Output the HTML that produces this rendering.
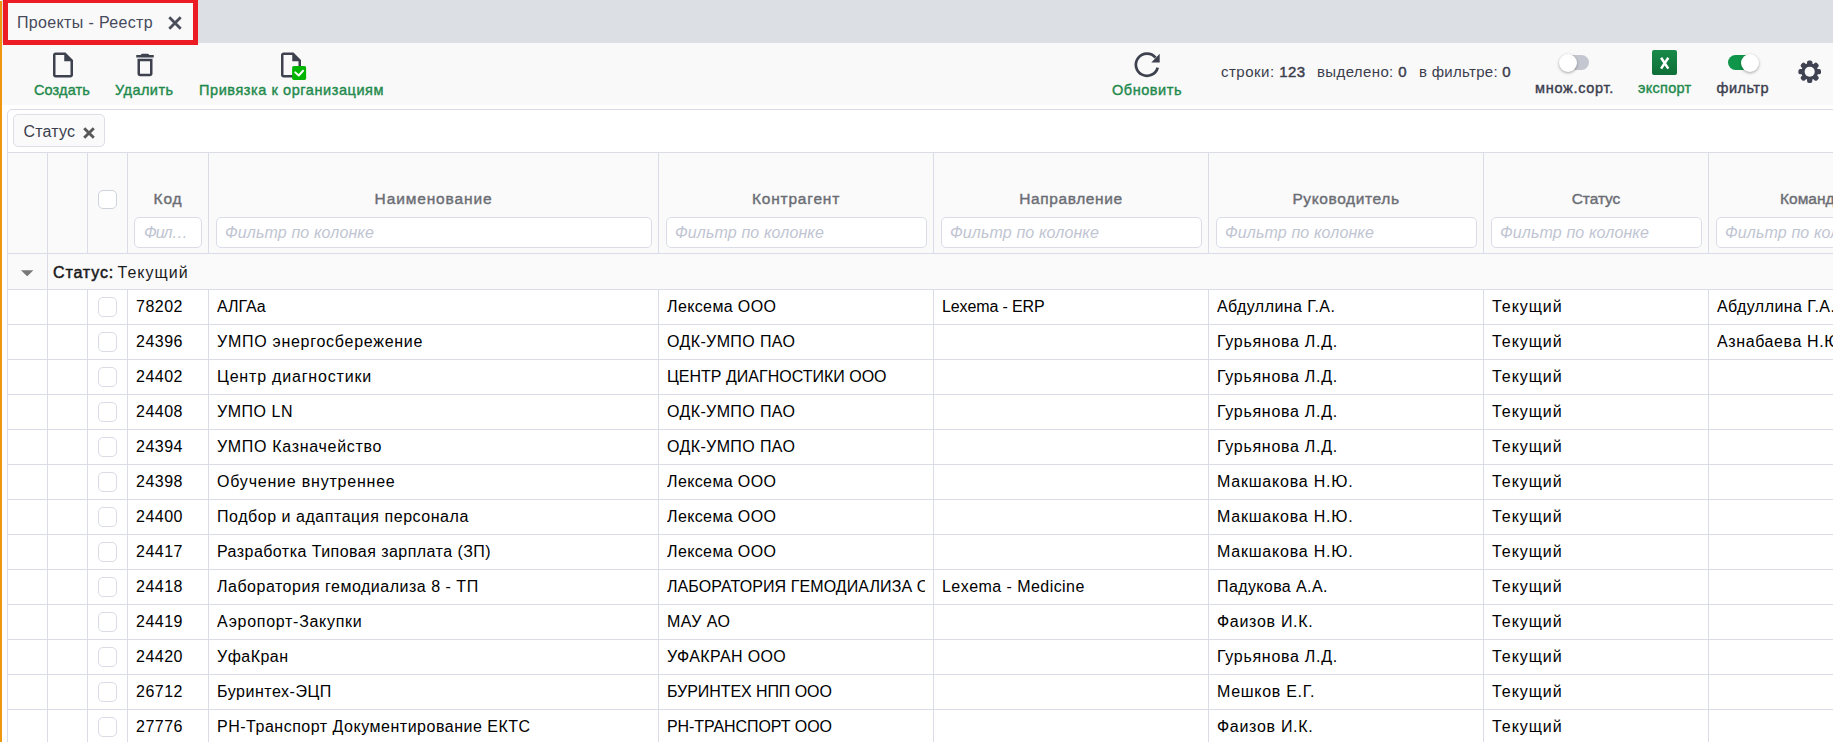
<!DOCTYPE html>
<html lang="ru"><head><meta charset="utf-8"><title>Проекты - Реестр</title>
<style>
*{box-sizing:border-box;margin:0;padding:0}
html,body{width:1833px;height:742px;overflow:hidden;background:#fff}
body{position:relative;font-family:"Liberation Sans",sans-serif;font-size:16px;color:#111}
.edge{position:absolute;left:0;top:1px;width:2px;height:741px;background:#ee960e}
.tabbar{z-index:2;position:absolute;left:2px;top:0;width:1831px;height:43px;background:#dcdfe4}
.tab{position:absolute;left:6px;top:0;width:190px;height:43px;background:#f9f9f9}
.tab .tt{position:absolute;left:9px;top:0;line-height:46px;font-size:16px;color:#454a5c;white-space:nowrap}
.tab svg{position:absolute;left:159.5px;top:15.5px;width:14px;height:14px}
.tb{position:absolute;left:2px;top:42px;width:1831px;height:63px;background:#f9f9f9}
.btn{position:absolute;top:0;height:63px}
.lbl{position:absolute;white-space:nowrap;font-size:14.5px;line-height:18px;top:39px;color:#1f8a4c;font-weight:normal;-webkit-text-stroke:0.4px #1f8a4c}
.lbl.dk{color:#3b3e4e;-webkit-text-stroke-color:#3b3e4e}
.ico{position:absolute}
.stat{position:absolute;top:21px;font-size:15px;line-height:18px;color:#3b3e4e;white-space:nowrap}
.stat b{font-weight:normal;-webkit-text-stroke:0.45px #3b3e4e}
.grid{position:absolute;left:7px;top:109px;width:1900px;height:700px;border:1px solid #dadde8;border-radius:5px 0 0 0;background:#fff}
.grid>div{position:absolute;left:0;width:1900px}
.gp{top:0;height:42px}
.chip{position:absolute;left:5px;top:4px;width:92px;height:33px;border:1px solid #dcdfe8;border-radius:5px;background:#fafafa}
.chip .ct{position:absolute;left:9.5px;top:0;line-height:33px;font-size:16px;color:#3b3e4e}
.chip .cx{position:absolute;left:69px;top:12px;width:12px;height:12px}
.hdr{top:42px;height:102px;border-top:1px solid #dadde8;border-bottom:1px solid #dadde8;background:#fafafa}
.vl{position:absolute;top:0;bottom:0;width:1px;background:#dadde8}
.hl{position:absolute;top:37px;line-height:18px;font-size:15.5px;font-weight:normal;color:#6b6d74;-webkit-text-stroke:0.4px #6b6d74;text-align:center;white-space:nowrap}
.fi{position:absolute;top:64px;height:31px;border:1px solid #dadde8;border-radius:5px;background:#fff;overflow:hidden;white-space:nowrap}
.fi em{position:absolute;left:8px;top:0;line-height:29px;font-size:16px;font-style:italic;color:#bfc5d2}
.cb{position:absolute;width:19px;height:19px;border:1px solid #d9dce6;border-radius:5px;background:#fff}
.hcb{left:90px;top:37px;border-color:#cfd3de}
.rcb{left:90px;top:7px;height:20px}
.grp{top:144px;height:36px;border-bottom:1px solid #dadde8;background:#fafafa}
.tri{position:absolute;left:13.3px;top:15.6px;width:12.4px;height:6.6px}
.gt{position:absolute;left:45px;top:0;line-height:37px;word-spacing:-2px;font-size:16px;white-space:nowrap;color:#1a1a1a}
.row{height:35px;border-bottom:1px solid #dadde8;background:#fff}
.c{position:absolute;top:0;line-height:34px;white-space:nowrap;overflow:hidden;font-size:16px;color:#000}
.red{z-index:3;position:absolute;left:3px;top:-2px;width:195px;height:47px;border:5px solid #ec1c24}
.tg{position:absolute;width:32px;height:20px}
.tg .trk{position:absolute;left:2px;top:0;width:28.5px;height:15px;border-radius:8px;background:#c4c7d0}
.tg .knb{position:absolute;left:0;top:-1.5px;width:18.4px;height:18.4px;border-radius:50%;background:#fff;box-shadow:0 1px 3px rgba(0,0,0,.35)}
.tg.on .trk{left:0;width:30px;background:#10964a}
.tg.on .knb{left:13px}
.xl{position:absolute;width:25px;height:25px;border-radius:2px;background:linear-gradient(#178a49,#0f6f38)}
.xl svg{position:absolute;left:0;top:0}
.gt b{font-weight:normal;-webkit-text-stroke:0.5px #1a1a1a}
#l1{letter-spacing:0.12px}
#l2{letter-spacing:0.45px}
#l3{letter-spacing:0.57px}
#l4{letter-spacing:0.54px}
#l5{letter-spacing:0.71px}
#l6{letter-spacing:0.30px}
#l7{letter-spacing:0.48px}
#s1{letter-spacing:0.48px}
#s2{letter-spacing:0.38px}
#s3{letter-spacing:0.29px}
.tab .tt{letter-spacing:0.35px}.chip .ct{letter-spacing:0.16px}.gt b{letter-spacing:0.87px}.gt{letter-spacing:1.00px}.fi em{letter-spacing:0.12px}

</style></head>
<body>
<div class="edge"></div>
<div class="tabbar">
  <div class="tab"><span class="tt">Проекты - Реестр</span>
    <svg viewBox="0 0 13 13"><path d="M1.2 1.2L11.8 11.8M11.8 1.2L1.2 11.8" stroke="#4a4d5a" stroke-width="2.6" fill="none"/></svg>
  </div>
</div>
<div class="tb">
  <svg class="ico" style="left:46px;top:8px" width="30" height="30" viewBox="0 0 24 24"><path fill="#3e414e" d="M14 2H6c-1.1 0-1.99.9-1.99 2L4 20c0 1.1.89 2 1.99 2H18c1.1 0 2-.9 2-2V8l-6-6zM6 20V4h7v5h5v11H6z"/></svg>
  <span class="lbl" id="l1" style="left:32px">Создать</span>
  <svg class="ico" style="left:128px;top:8px" width="30" height="30" viewBox="0 0 24 24"><path fill="#3e414e" d="M6 19c0 1.1.9 2 2 2h8c1.1 0 2-.9 2-2V7H6v12zM8 9h8v10H8V9zm7.5-5l-1-1h-5l-1 1H5v2h14V4h-3.5z"/></svg>
  <span class="lbl" id="l2" style="left:113px">Удалить</span>
  <svg class="ico" style="left:274px;top:8px" width="34" height="34" viewBox="0 0 27.2 27.2"><path fill="#3e414e" d="M14 2H6c-1.1 0-1.99.9-1.99 2L4 20c0 1.1.89 2 1.99 2H18c1.1 0 2-.9 2-2V8l-6-6zM6 20V4h7v5h5v11H6z"/><rect x="12.9" y="12.8" width="11.2" height="11.2" rx="1.4" fill="#00b400"/><path d="M15.4 17.9L18.2 20.4L21.6 16.6" stroke="#fff" stroke-width="1.6" fill="none" stroke-linecap="round" stroke-linejoin="round"/></svg>
  <span class="lbl" id="l3" style="left:197px">Привязка к организациям</span>
  <svg class="ico" style="left:1130px;top:8px" width="30" height="30" viewBox="0 0 30 30"><path d="M23.5 7.57A11.1 11.1 0 1 0 25.72 17.57" stroke="#3e414e" stroke-width="2.7" fill="none"/><path d="M27.7 3.8V12.4H19.3Z" fill="#3e414e"/></svg>
  <span class="lbl" id="l4" style="left:1110px">Обновить</span>
  <span class="stat" id="s1" style="left:1219px">строки: <b>123</b></span>
  <span class="stat" id="s2" style="left:1315px">выделено: <b>0</b></span>
  <span class="stat" id="s3" style="left:1417px">в фильтре: <b>0</b></span>
  <div class="tg" style="left:1556.5px;top:13px"><i class="trk"></i><i class="knb"></i></div>
  <span class="lbl dk" id="l5" style="left:1533px;top:37px">множ.сорт.</span>
  <div class="xl" style="left:1650px;top:8px"><svg width="25" height="25" viewBox="0 0 25 25"><path d="M9.1 7.8L16.3 18.6M16.3 7.8L9.1 18.6" stroke="#fff" stroke-width="2.5" fill="none"/></svg></div>
  <span class="lbl" id="l6" style="left:1636px;top:37px">экспорт</span>
  <div class="tg on" style="left:1726px;top:13px"><i class="trk"></i><i class="knb"></i></div>
  <span class="lbl dk" id="l7" style="left:1714.5px;top:37px">фильтр</span>
  <svg class="ico" style="left:1796.3px;top:18.1px" width="23.4" height="23.4" viewBox="-12 -12 24 24"><g fill="#3f4250"><circle r="8.6"/><g id="t"><rect x="-2.7" y="-11.6" width="5.4" height="23.2" rx="2"/></g><rect x="-2.7" y="-11.6" width="5.4" height="23.2" rx="2" transform="rotate(45)"/><rect x="-2.7" y="-11.6" width="5.4" height="23.2" rx="2" transform="rotate(90)"/><rect x="-2.7" y="-11.6" width="5.4" height="23.2" rx="2" transform="rotate(135)"/></g><circle r="5.2" fill="#f9f9f9"/></svg>
</div>
<div class="grid">
<div class="gp"><div class="chip"><span class="ct">Статус</span><svg class="cx" viewBox="0 0 10 10"><path d="M1 1L9 9M9 1L1 9" stroke="#585858" stroke-width="2.4" fill="none"/></svg></div></div>
<div class="hdr">
<i class="vl" style="left:39px"></i><i class="vl" style="left:79px"></i><i class="vl" style="left:119px"></i><i class="vl" style="left:200px"></i><i class="vl" style="left:650px"></i><i class="vl" style="left:925px"></i><i class="vl" style="left:1200px"></i><i class="vl" style="left:1475px"></i><i class="vl" style="left:1700px"></i><span class="cb hcb"></span>
<span class="hl" style="left:120px;width:80px;letter-spacing:0.80px">Код</span><span class="fi" style="left:126px;width:68px"><em style="left:9px;letter-spacing:-1px">Фил…</em></span>
<span class="hl" style="left:201px;width:449px;letter-spacing:0.86px">Наименование</span><span class="fi" style="left:208px;width:436px"><em>Фильтр по колонке</em></span>
<span class="hl" style="left:651px;width:274px;letter-spacing:0.80px">Контрагент</span><span class="fi" style="left:658px;width:261px"><em>Фильтр по колонке</em></span>
<span class="hl" style="left:926px;width:274px;letter-spacing:0.59px">Направление</span><span class="fi" style="left:933px;width:261px"><em>Фильтр по колонке</em></span>
<span class="hl" style="left:1201px;width:274px;letter-spacing:0.61px">Руководитель</span><span class="fi" style="left:1208px;width:261px"><em>Фильтр по колонке</em></span>
<span class="hl" style="left:1476px;width:224px;letter-spacing:-0.06px">Статус</span><span class="fi" style="left:1483px;width:211px"><em>Фильтр по колонке</em></span>
<span class="hl" style="left:1772px;width:300px;text-align:left">Команда проекта</span><span class="fi" style="left:1708px;width:211px"><em>Фильтр по колонке</em></span>
</div>
<div class="grp"><i class="vl" style="left:39px"></i><svg class="tri" viewBox="0 0 12 6"><path d="M0 0H12L6 6Z" fill="#787878"/></svg><span class="gt"><b>Статус:</b> Текущий</span></div>
<div class="row" style="top:180px"><i class="vl" style="left:39px"></i><i class="vl" style="left:79px"></i><i class="vl" style="left:119px"></i><i class="vl" style="left:200px"></i><i class="vl" style="left:650px"></i><i class="vl" style="left:925px"></i><i class="vl" style="left:1200px"></i><i class="vl" style="left:1475px"></i><i class="vl" style="left:1700px"></i><span class="cb rcb"></span><span class="c" style="left:128px;width:72px;letter-spacing:0.50px">78202</span><span class="c" style="left:209px;width:433px;letter-spacing:-0.07px">АЛГАа</span><span class="c" style="left:659px;width:258px;letter-spacing:0.38px">Лексема ООО</span><span class="c" style="left:934px;width:258px;letter-spacing:-0.12px">Lexema - ERP</span><span class="c" style="left:1209px;width:258px;letter-spacing:0.44px">Абдуллина Г.А.</span><span class="c" style="left:1484px;width:208px;letter-spacing:0.95px">Текущий</span><span class="c" style="left:1709px;width:208px;letter-spacing:0.44px">Абдуллина Г.А.</span></div>
<div class="row" style="top:215px"><i class="vl" style="left:39px"></i><i class="vl" style="left:79px"></i><i class="vl" style="left:119px"></i><i class="vl" style="left:200px"></i><i class="vl" style="left:650px"></i><i class="vl" style="left:925px"></i><i class="vl" style="left:1200px"></i><i class="vl" style="left:1475px"></i><i class="vl" style="left:1700px"></i><span class="cb rcb"></span><span class="c" style="left:128px;width:72px;letter-spacing:0.50px">24396</span><span class="c" style="left:209px;width:433px;letter-spacing:0.73px">УМПО энергосбережение</span><span class="c" style="left:659px;width:258px;letter-spacing:0.38px">ОДК-УМПО ПАО</span><span class="c" style="left:1209px;width:258px;letter-spacing:0.71px">Гурьянова Л.Д.</span><span class="c" style="left:1484px;width:208px;letter-spacing:0.95px">Текущий</span><span class="c" style="left:1709px;width:208px;letter-spacing:0.60px">Азнабаева Н.Ю.</span></div>
<div class="row" style="top:250px"><i class="vl" style="left:39px"></i><i class="vl" style="left:79px"></i><i class="vl" style="left:119px"></i><i class="vl" style="left:200px"></i><i class="vl" style="left:650px"></i><i class="vl" style="left:925px"></i><i class="vl" style="left:1200px"></i><i class="vl" style="left:1475px"></i><i class="vl" style="left:1700px"></i><span class="cb rcb"></span><span class="c" style="left:128px;width:72px;letter-spacing:0.50px">24402</span><span class="c" style="left:209px;width:433px;letter-spacing:0.81px">Центр диагностики</span><span class="c" style="left:659px;width:258px">ЦЕНТР ДИАГНОСТИКИ ООО</span><span class="c" style="left:1209px;width:258px;letter-spacing:0.71px">Гурьянова Л.Д.</span><span class="c" style="left:1484px;width:208px;letter-spacing:0.95px">Текущий</span></div>
<div class="row" style="top:285px"><i class="vl" style="left:39px"></i><i class="vl" style="left:79px"></i><i class="vl" style="left:119px"></i><i class="vl" style="left:200px"></i><i class="vl" style="left:650px"></i><i class="vl" style="left:925px"></i><i class="vl" style="left:1200px"></i><i class="vl" style="left:1475px"></i><i class="vl" style="left:1700px"></i><span class="cb rcb"></span><span class="c" style="left:128px;width:72px;letter-spacing:0.50px">24408</span><span class="c" style="left:209px;width:433px;letter-spacing:0.53px">УМПО LN</span><span class="c" style="left:659px;width:258px;letter-spacing:0.38px">ОДК-УМПО ПАО</span><span class="c" style="left:1209px;width:258px;letter-spacing:0.71px">Гурьянова Л.Д.</span><span class="c" style="left:1484px;width:208px;letter-spacing:0.95px">Текущий</span></div>
<div class="row" style="top:320px"><i class="vl" style="left:39px"></i><i class="vl" style="left:79px"></i><i class="vl" style="left:119px"></i><i class="vl" style="left:200px"></i><i class="vl" style="left:650px"></i><i class="vl" style="left:925px"></i><i class="vl" style="left:1200px"></i><i class="vl" style="left:1475px"></i><i class="vl" style="left:1700px"></i><span class="cb rcb"></span><span class="c" style="left:128px;width:72px;letter-spacing:0.50px">24394</span><span class="c" style="left:209px;width:433px;letter-spacing:0.69px">УМПО Казначейство</span><span class="c" style="left:659px;width:258px;letter-spacing:0.38px">ОДК-УМПО ПАО</span><span class="c" style="left:1209px;width:258px;letter-spacing:0.71px">Гурьянова Л.Д.</span><span class="c" style="left:1484px;width:208px;letter-spacing:0.95px">Текущий</span></div>
<div class="row" style="top:355px"><i class="vl" style="left:39px"></i><i class="vl" style="left:79px"></i><i class="vl" style="left:119px"></i><i class="vl" style="left:200px"></i><i class="vl" style="left:650px"></i><i class="vl" style="left:925px"></i><i class="vl" style="left:1200px"></i><i class="vl" style="left:1475px"></i><i class="vl" style="left:1700px"></i><span class="cb rcb"></span><span class="c" style="left:128px;width:72px;letter-spacing:0.50px">24398</span><span class="c" style="left:209px;width:433px;letter-spacing:0.79px">Обучение внутреннее</span><span class="c" style="left:659px;width:258px;letter-spacing:0.38px">Лексема ООО</span><span class="c" style="left:1209px;width:258px;letter-spacing:0.78px">Макшакова Н.Ю.</span><span class="c" style="left:1484px;width:208px;letter-spacing:0.95px">Текущий</span></div>
<div class="row" style="top:390px"><i class="vl" style="left:39px"></i><i class="vl" style="left:79px"></i><i class="vl" style="left:119px"></i><i class="vl" style="left:200px"></i><i class="vl" style="left:650px"></i><i class="vl" style="left:925px"></i><i class="vl" style="left:1200px"></i><i class="vl" style="left:1475px"></i><i class="vl" style="left:1700px"></i><span class="cb rcb"></span><span class="c" style="left:128px;width:72px;letter-spacing:0.50px">24400</span><span class="c" style="left:209px;width:433px;letter-spacing:0.54px">Подбор и адаптация персонала</span><span class="c" style="left:659px;width:258px;letter-spacing:0.38px">Лексема ООО</span><span class="c" style="left:1209px;width:258px;letter-spacing:0.78px">Макшакова Н.Ю.</span><span class="c" style="left:1484px;width:208px;letter-spacing:0.95px">Текущий</span></div>
<div class="row" style="top:425px"><i class="vl" style="left:39px"></i><i class="vl" style="left:79px"></i><i class="vl" style="left:119px"></i><i class="vl" style="left:200px"></i><i class="vl" style="left:650px"></i><i class="vl" style="left:925px"></i><i class="vl" style="left:1200px"></i><i class="vl" style="left:1475px"></i><i class="vl" style="left:1700px"></i><span class="cb rcb"></span><span class="c" style="left:128px;width:72px;letter-spacing:0.50px">24417</span><span class="c" style="left:209px;width:433px;letter-spacing:0.45px">Разработка Типовая зарплата (ЗП)</span><span class="c" style="left:659px;width:258px;letter-spacing:0.38px">Лексема ООО</span><span class="c" style="left:1209px;width:258px;letter-spacing:0.78px">Макшакова Н.Ю.</span><span class="c" style="left:1484px;width:208px;letter-spacing:0.95px">Текущий</span></div>
<div class="row" style="top:460px"><i class="vl" style="left:39px"></i><i class="vl" style="left:79px"></i><i class="vl" style="left:119px"></i><i class="vl" style="left:200px"></i><i class="vl" style="left:650px"></i><i class="vl" style="left:925px"></i><i class="vl" style="left:1200px"></i><i class="vl" style="left:1475px"></i><i class="vl" style="left:1700px"></i><span class="cb rcb"></span><span class="c" style="left:128px;width:72px;letter-spacing:0.50px">24418</span><span class="c" style="left:209px;width:433px;letter-spacing:0.51px">Лаборатория гемодиализа 8 - ТП</span><span class="c" style="left:659px;width:258px;letter-spacing:0.09px">ЛАБОРАТОРИЯ ГЕМОДИАЛИЗА ООО</span><span class="c" style="left:934px;width:258px;letter-spacing:0.45px">Lexema - Medicine</span><span class="c" style="left:1209px;width:258px;letter-spacing:0.39px">Падукова А.А.</span><span class="c" style="left:1484px;width:208px;letter-spacing:0.95px">Текущий</span></div>
<div class="row" style="top:495px"><i class="vl" style="left:39px"></i><i class="vl" style="left:79px"></i><i class="vl" style="left:119px"></i><i class="vl" style="left:200px"></i><i class="vl" style="left:650px"></i><i class="vl" style="left:925px"></i><i class="vl" style="left:1200px"></i><i class="vl" style="left:1475px"></i><i class="vl" style="left:1700px"></i><span class="cb rcb"></span><span class="c" style="left:128px;width:72px;letter-spacing:0.50px">24419</span><span class="c" style="left:209px;width:433px;letter-spacing:0.71px">Аэропорт-Закупки</span><span class="c" style="left:659px;width:258px;letter-spacing:0.44px">МАУ АО</span><span class="c" style="left:1209px;width:258px;letter-spacing:0.70px">Фаизов И.К.</span><span class="c" style="left:1484px;width:208px;letter-spacing:0.95px">Текущий</span></div>
<div class="row" style="top:530px"><i class="vl" style="left:39px"></i><i class="vl" style="left:79px"></i><i class="vl" style="left:119px"></i><i class="vl" style="left:200px"></i><i class="vl" style="left:650px"></i><i class="vl" style="left:925px"></i><i class="vl" style="left:1200px"></i><i class="vl" style="left:1475px"></i><i class="vl" style="left:1700px"></i><span class="cb rcb"></span><span class="c" style="left:128px;width:72px;letter-spacing:0.50px">24420</span><span class="c" style="left:209px;width:433px;letter-spacing:0.47px">УфаКран</span><span class="c" style="left:659px;width:258px;letter-spacing:0.37px">УФАКРАН ООО</span><span class="c" style="left:1209px;width:258px;letter-spacing:0.71px">Гурьянова Л.Д.</span><span class="c" style="left:1484px;width:208px;letter-spacing:0.95px">Текущий</span></div>
<div class="row" style="top:565px"><i class="vl" style="left:39px"></i><i class="vl" style="left:79px"></i><i class="vl" style="left:119px"></i><i class="vl" style="left:200px"></i><i class="vl" style="left:650px"></i><i class="vl" style="left:925px"></i><i class="vl" style="left:1200px"></i><i class="vl" style="left:1475px"></i><i class="vl" style="left:1700px"></i><span class="cb rcb"></span><span class="c" style="left:128px;width:72px;letter-spacing:0.50px">26712</span><span class="c" style="left:209px;width:433px;letter-spacing:0.53px">Буринтех-ЭЦП</span><span class="c" style="left:659px;width:258px;letter-spacing:-0.07px">БУРИНТЕХ НПП ООО</span><span class="c" style="left:1209px;width:258px;letter-spacing:0.70px">Мешков Е.Г.</span><span class="c" style="left:1484px;width:208px;letter-spacing:0.95px">Текущий</span></div>
<div class="row" style="top:600px"><i class="vl" style="left:39px"></i><i class="vl" style="left:79px"></i><i class="vl" style="left:119px"></i><i class="vl" style="left:200px"></i><i class="vl" style="left:650px"></i><i class="vl" style="left:925px"></i><i class="vl" style="left:1200px"></i><i class="vl" style="left:1475px"></i><i class="vl" style="left:1700px"></i><span class="cb rcb"></span><span class="c" style="left:128px;width:72px;letter-spacing:0.50px">27776</span><span class="c" style="left:209px;width:433px;letter-spacing:0.51px">РН-Транспорт Документирование ЕКТС</span><span class="c" style="left:659px;width:258px;letter-spacing:-0.08px">РН-ТРАНСПОРТ ООО</span><span class="c" style="left:1209px;width:258px;letter-spacing:0.70px">Фаизов И.К.</span><span class="c" style="left:1484px;width:208px;letter-spacing:0.95px">Текущий</span></div>
</div>
<div class="red"></div>
</body></html>
